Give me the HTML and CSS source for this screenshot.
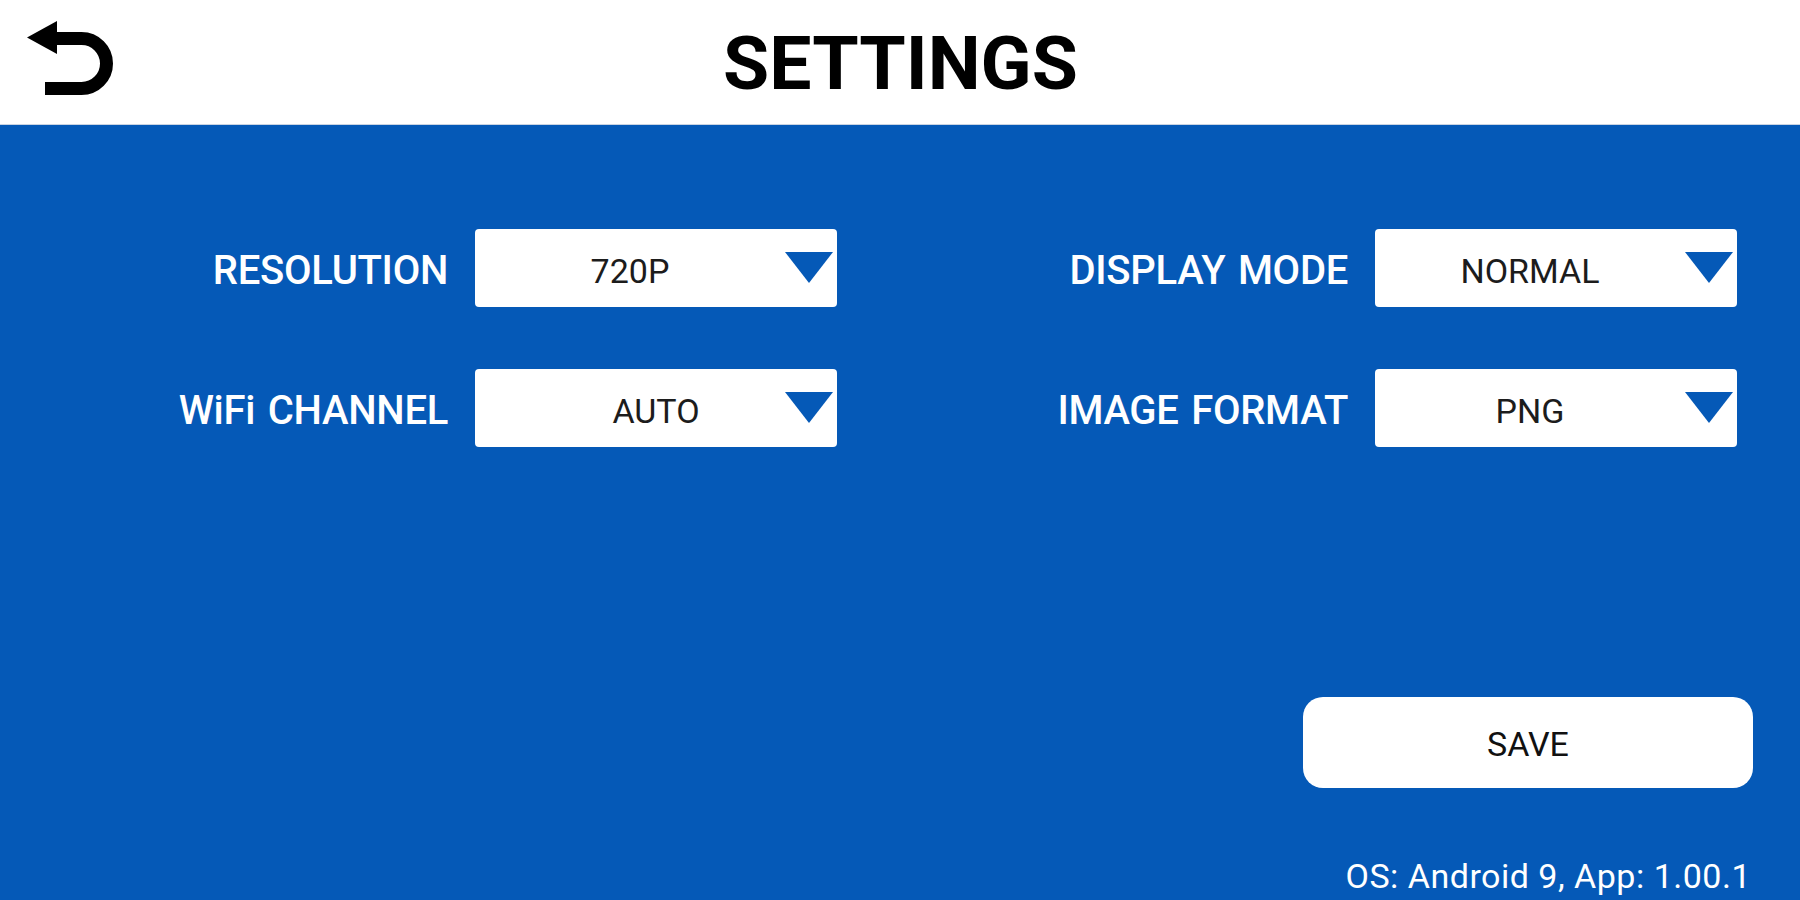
FILE: index.html
```html
<!DOCTYPE html>
<html lang="en">
<head>
<meta charset="utf-8">
<title>Settings</title>
<link rel="stylesheet" href="styles.css">
</head>
<body>
<div class="app">
  <header class="topbar">
    <div class="topbar-left">
      <svg class="back-icon" width="120" height="124" viewBox="0 0 120 124" aria-label="Back">
        <polygon points="27,37.5 57,21 57,54" fill="#000"/>
        <path d="M54 38.5 H81.5 A25 25 0 0 1 81.5 88.5 H45" fill="none" stroke="#000" stroke-width="13"/>
      </svg>
    </div>
    <h1 class="title">SETTINGS</h1>
    <div class="topbar-right"></div>
  </header>
  <main class="content">
    <div class="settings-grid">
      <div class="label">RESOLUTION</div>
      <div class="select">
        <span class="select-value">720P</span>
        <svg class="select-arrow" width="48" height="31" viewBox="0 0 48 31"><polygon points="0,0 48,0 24,31" fill="#0559B7"/></svg>
      </div>
      <div class="label">DISPLAY MODE</div>
      <div class="select">
        <span class="select-value">NORMAL</span>
        <svg class="select-arrow" width="48" height="31" viewBox="0 0 48 31"><polygon points="0,0 48,0 24,31" fill="#0559B7"/></svg>
      </div>
      <div class="label">WiFi CHANNEL</div>
      <div class="select">
        <span class="select-value select-value--wide">AUTO</span>
        <svg class="select-arrow" width="48" height="31" viewBox="0 0 48 31"><polygon points="0,0 48,0 24,31" fill="#0559B7"/></svg>
      </div>
      <div class="label">IMAGE FORMAT</div>
      <div class="select">
        <span class="select-value">PNG</span>
        <svg class="select-arrow" width="48" height="31" viewBox="0 0 48 31"><polygon points="0,0 48,0 24,31" fill="#0559B7"/></svg>
      </div>
    </div>
    <div class="bottom">
      <button class="save-btn" type="button">SAVE</button>
      <div class="version">OS: Android 9, App: 1.00.1</div>
    </div>
  </main>
</div>
</body>
</html>
```
FILE: styles.css
```css
* { box-sizing: border-box; }
html, body {
  margin: 0;
  padding: 0;
  width: 1800px;
  height: 900px;
  overflow: hidden;
  font-family: Roboto, "Liberation Sans", Arial, sans-serif;
}
.app {
  display: flex;
  flex-direction: column;
  height: 900px;
}
.topbar {
  height: 125px;
  background: #ffffff;
  border-bottom: 1px solid #c9d3e2;
  display: grid;
  grid-template-columns: 1fr auto 1fr;
  align-items: center;
}
.topbar-left {
  align-self: stretch;
  display: flex;
}
.back-icon { display: block; }
.title {
  margin: 0;
  font-size: 75px;
  font-weight: 700;
  color: #000;
  line-height: 1;
  padding-top: 2px;
  padding-left: 1px;
}
.content {
  flex: 1;
  background: #0559B7;
  display: flex;
  flex-direction: column;
  padding-top: 104px;
}
.settings-grid {
  display: grid;
  grid-template-columns: 448px 362px 484px 362px;
  column-gap: 27px;
  row-gap: 62px;
}
.label {
  color: #ffffff;
  font-size: 40px;
  font-weight: 500;
  text-align: right;
  align-self: center;
  line-height: 1;
  padding-top: 6px;
  letter-spacing: -0.3px;
  word-spacing: 3px;
}
.select {
  height: 78px;
  background: #ffffff;
  border-radius: 4px;
  display: flex;
  align-items: flex-start;
}
.select-value {
  flex: 1;
  align-self: center;
  text-align: center;
  font-size: 34px;
  color: #1c1c1c;
  line-height: 1;
  padding-top: 6px;
}
.select-value--wide { padding-left: 52px; }
.select-arrow {
  margin-top: 23px;
  margin-right: 4px;
  flex: none;
}
.bottom {
  display: flex;
  flex-direction: column;
  align-items: flex-end;
  margin-top: 250px;
}
.save-btn {
  width: 450px;
  height: 91px;
  margin-right: 47px;
  border: none;
  border-radius: 20px;
  background: #ffffff;
  color: #111;
  font-family: Roboto, "Liberation Sans", Arial, sans-serif;
  font-size: 34px;
  padding: 0;
  padding-top: 2px;
}
.version {
  margin-top: 71px;
  margin-right: 49px;
  color: #ffffff;
  font-size: 34px;
  line-height: 34px;
  letter-spacing: 0.5px;
}
```
